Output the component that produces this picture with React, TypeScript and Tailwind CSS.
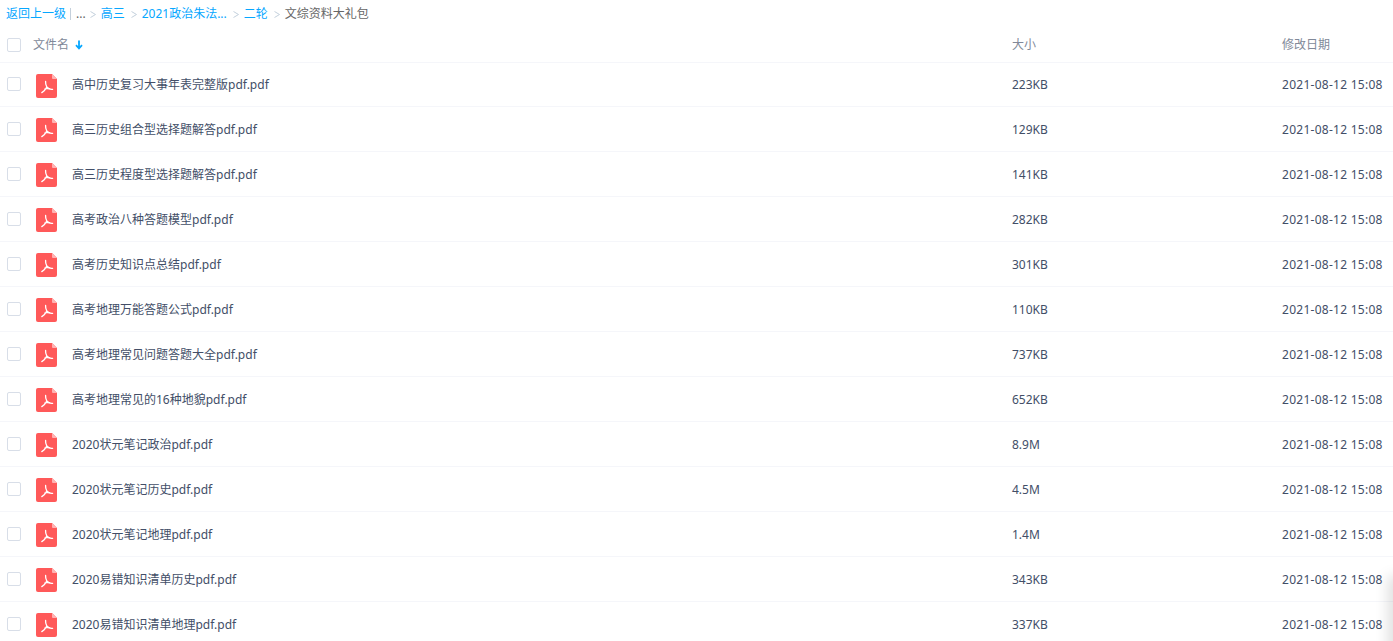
const files = [
  { name: "高中历史复习大事年表完整版pdf.pdf", size: "223KB" },
  { name: "高三历史组合型选择题解答pdf.pdf", size: "129KB" },
  { name: "高三历史程度型选择题解答pdf.pdf", size: "141KB" },
  { name: "高考政治八种答题模型pdf.pdf", size: "282KB" },
  { name: "高考历史知识点总结pdf.pdf", size: "301KB" },
  { name: "高考地理万能答题公式pdf.pdf", size: "110KB" },
  { name: "高考地理常见问题答题大全pdf.pdf", size: "737KB" },
  { name: "高考地理常见的16种地貌pdf.pdf", size: "652KB" },
  { name: "2020状元笔记政治pdf.pdf", size: "8.9M" },
  { name: "2020状元笔记历史pdf.pdf", size: "4.5M" },
  { name: "2020状元笔记地理pdf.pdf", size: "1.4M" },
  { name: "2020易错知识清单历史pdf.pdf", size: "343KB" },
  { name: "2020易错知识清单地理pdf.pdf", size: "337KB" },
];

const Checkbox = () => (
  <span className="block w-[14px] h-[14px] rounded-[2px] border border-[#d8dee8] bg-white" />
);

const PdfIcon = () => (
  <svg width="21" height="24" viewBox="0 0 21 24" className="block mt-[2px]">
    <path d="M2 0H16L21 5V22a2 2 0 0 1-2 2H2a2 2 0 0 1-2-2V2a2 2 0 0 1 2-2Z" fill="#ff5959" />
    <path d="M16 0L21 5H17a1 1 0 0 1-1-1Z" fill="#ffb3b3" />
    <path
      d="M9.6 7.5C9.4 9.5 10 11.5 10.8 13C9.8 15.2 8 17.2 5.8 18.6M10.8 13C12 14.6 14 15.6 16.6 15.3M8.8 15.2C10.4 14.4 12 14 13.6 14.6"
      fill="none"
      stroke="#fff"
      strokeWidth="1.3"
      strokeLinecap="round"
      strokeLinejoin="round"
    />
  </svg>
);

const Sep = () => (
  <svg width="6" height="7" viewBox="0 0 6 7" className="ml-[6px] mr-[5px] mt-px">
    <path d="M0.5 0.5L5.5 3.5L0.5 6.5" fill="none" stroke="#c4d0dc" strokeWidth="1" />
  </svg>
);

export default function App() {
  return (
    <div className="relative h-[641px] overflow-hidden bg-white text-[12px] text-[#424e67] [font-family:'Noto_Sans','Noto_Sans_CJK_SC',sans-serif]">
      <div className="flex h-[27px] items-center pl-[6px] text-[#06a7ff]">
        <span>返回上一级</span>
        <span className="ml-[4px] mr-[5px] h-[12px] w-px bg-[#c4d0dc]" />
        <span className="mr-[-2px] text-[#666]">...</span>
        <Sep />
        <span>高三</span>
        <Sep />
        <span>2021政治朱法...</span>
        <Sep />
        <span>二轮</span>
        <Sep />
        <span className="text-[#666]">文综资料大礼包</span>
      </div>

      <div className="flex h-[36px] items-center border-b border-[#f5f6fa] text-[#818999]">
        <div className="w-[33px] pl-[7px]">
          <Checkbox />
        </div>
        <div className="flex flex-1 items-center gap-[6px]">
          <span>文件名</span>
          <svg width="8" height="10" viewBox="0 0 8 10">
            <path d="M4 0.5V8.5M1 5.2L4 8.5L7 5.2" fill="none" stroke="#06a7ff" strokeWidth="1.8" />
          </svg>
        </div>
        <div className="w-[270px]">大小</div>
        <div className="w-[111px]">修改日期</div>
      </div>

      {files.map((f, i) => {
        const textPad = i === 0 ? "pt-0" : "pt-[2px]";
        return (
          <div
            key={f.name}
            className={`flex items-center border-b border-[#f5f6fa] ${i === 0 ? "h-[44px]" : "h-[45px]"}`}
          >
            <div className={`w-[36px] pl-[7px] ${i === 0 ? "pb-px" : ""}`}>
              <Checkbox />
            </div>
            <div className="w-[36px]">
              <PdfIcon />
            </div>
            <div className={`flex-1 ${textPad}`}>{f.name}</div>
            <div className={`w-[270px] ${textPad}`}>{f.size}</div>
            <div className={`w-[111px] whitespace-nowrap tracking-[0.27px] ${textPad}`}>2021-08-12 15:08</div>
          </div>
        );
      })}

      <div className="absolute bottom-[-20px] right-[-14px] h-[80px] w-[14px] shadow-[0_0_14px_5px_rgba(0,0,0,0.13)]" />
    </div>
  );
}
